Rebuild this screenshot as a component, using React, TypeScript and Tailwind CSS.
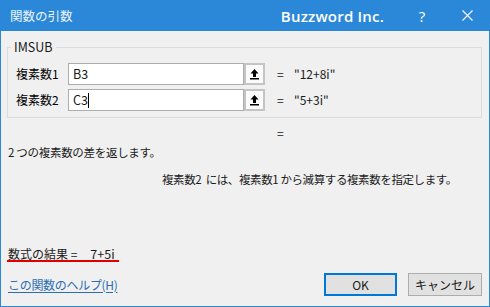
import React from "react";

const ArrowBtn = () => (
  <div className="w-[21px] h-[22px] border-2 border-[#c4c4c4] bg-[#fbfbfb] flex items-center justify-center">
    <svg width="11" height="12" viewBox="0 0 11 12">
      <path d="M5.5 1 L1.5 5.5 L4 5.5 L4 9 L7 9 L7 5.5 L9.5 5.5 Z" fill="#000" />
      <rect x="1" y="10" width="9" height="1.5" fill="#000" />
    </svg>
  </div>
);

const Row = ({ label, value, result, cursor }: { label: string; value: string; result: string; cursor?: boolean }) => (
  <div className="flex items-center h-[22px]">
    <div className="w-[60px] pl-[8px] text-[#000]">{label}</div>
    <div className="w-[176px] h-[22px] border border-[#adadad] bg-white flex items-center pl-[4px] text-[12.5px]">
      <span>{value}</span>
      {cursor && <span className="w-px h-[15px] bg-black" />}
    </div>
    <ArrowBtn />
    <div className="ml-[12px] w-[17px]">=</div>
    <div>{result}</div>
  </div>
);

export default function App() {
  return (
    <div
      className="w-[490px] h-[307px] flex flex-col bg-[#2b88d8] text-[12px] leading-[16px] text-[#1a1a1a] overflow-hidden"
      style={{ fontFamily: '"Noto Sans CJK JP", "Noto Sans", sans-serif' }}
    >
      <div className="h-[31px] flex items-center text-white shrink-0">
        <div className="pl-[10px] text-[12.5px] text-[#eef4fa]">関数の引数</div>
        <div className="flex-1" />
        <div className="text-[15px] font-semibold tracking-[0.2px]" style={{ fontFamily: '"Open Sans", "Noto Sans", sans-serif' }}>
          Buzzword Inc.
        </div>
        <div className="w-[15px]" />
        <div className="w-[46px] flex justify-center text-[15px]" style={{ fontFamily: '"Open Sans", sans-serif' }}>?</div>
        <div className="w-[45px] flex justify-center">
          <svg width="11" height="11" viewBox="0 0 11 11">
            <path d="M0.5 0.5 L10.5 10.5 M10.5 0.5 L0.5 10.5" stroke="#fff" strokeWidth="1.1" />
          </svg>
        </div>
      </div>
      <div className="flex-1 mx-px mb-px bg-[#f0f0f0] flex flex-col pl-[6px] pr-[7px]">
        <fieldset className="mt-[8px] border border-[#dcdcdc] pt-[8px] pb-[6px] flex flex-col gap-[4px]">
          <legend className="ml-[3px] px-[3px] leading-[16px] text-[12.5px]">IMSUB</legend>
          <Row label="複素数1" value="B3" result={'"12+8i"'} />
          <Row label="複素数2" value="C3" result={'"5+3i"'} cursor />
        </fieldset>
        <div className="mt-[7px] ml-[270px]">=</div>
        <div className="mt-[3px] pl-[1px] text-[11.5px] tracking-[-0.3px] whitespace-nowrap">2 つの複素数の差を返します。</div>
        <div className="mt-[11px] ml-[155px] text-[11.5px] tracking-[-0.4px] whitespace-nowrap">
          複素数2&nbsp;&nbsp;には、複素数1 から減算する複素数を指定します。
        </div>
        <div className="mt-[60px] flex">
          <div className="w-[112px] pl-[1px] h-[15px] leading-[14px] border-b-2 border-[#e00000] whitespace-nowrap flex">
            <span>数式の結果 =</span>
            <span className="ml-[13px] text-[12.5px]">7+5i</span>
          </div>
        </div>
        <div className="mt-[11px] flex items-center">
          <a className="pl-[1px] text-[#2a6db5] underline underline-offset-2 tracking-[-0.3px]">この関数のヘルプ(H)</a>
          <div className="flex-1" />
          <button className="w-[73px] h-[23px] border-2 border-[#0078d7] bg-[#e1e1e1] flex items-center justify-center">OK</button>
          <button className="ml-[11px] w-[74px] h-[23px] border border-[#adadad] bg-[#e1e1e1] flex items-center justify-center">キャンセル</button>
        </div>
      </div>
    </div>
  );
}
